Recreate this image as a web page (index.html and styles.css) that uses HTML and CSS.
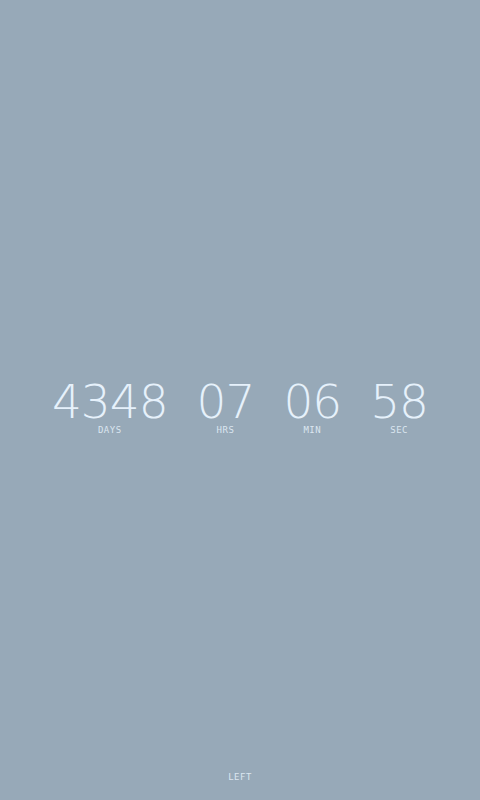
FILE: index.html
```html
<!DOCTYPE html>
<html>
<head>
<meta charset="utf-8">
<link rel="stylesheet" href="styles.css">
</head>
<body>
<div class="page">
  <main class="main">
    <div class="counter">
      <div class="unit"><div class="num">4348</div><div class="label">DAYS</div></div>
      <div class="unit"><div class="num">07</div><div class="label">HRS</div></div>
      <div class="unit"><div class="num">06</div><div class="label">MIN</div></div>
      <div class="unit"><div class="num">58</div><div class="label">SEC</div></div>
    </div>
  </main>
  <footer class="footer">LEFT</footer>
</div>
</body>
</html>
```
FILE: styles.css
```css
html, body {
  margin: 0;
  padding: 0;
  background: #97a9b8;
}
.page {
  width: 480px;
  height: 800px;
  display: flex;
  flex-direction: column;
}
.main {
  flex: 1;
  display: flex;
  align-items: center;
  justify-content: center;
  padding-top: 44px;
}
.counter {
  display: flex;
  gap: 29px;
  justify-content: center;
}
.unit {
  display: flex;
  flex-direction: column;
  align-items: center;
}
.num {
  font-family: "DejaVu Sans", sans-serif;
  font-weight: 200;
  font-size: 47px;
  line-height: 46px;
  color: #e6f1fb;
  letter-spacing: -1px;
}
.label {
  font-family: "DejaVu Sans Mono", monospace;
  font-size: 9px;
  line-height: 11px;
  color: #dbe6f0;
  letter-spacing: 0.5px;
}
.footer {
  font-family: "DejaVu Sans Mono", monospace;
  font-size: 9px;
  line-height: 12px;
  color: #dbe6f0;
  text-align: center;
  letter-spacing: 0.5px;
  padding-bottom: 17px;
}
```
